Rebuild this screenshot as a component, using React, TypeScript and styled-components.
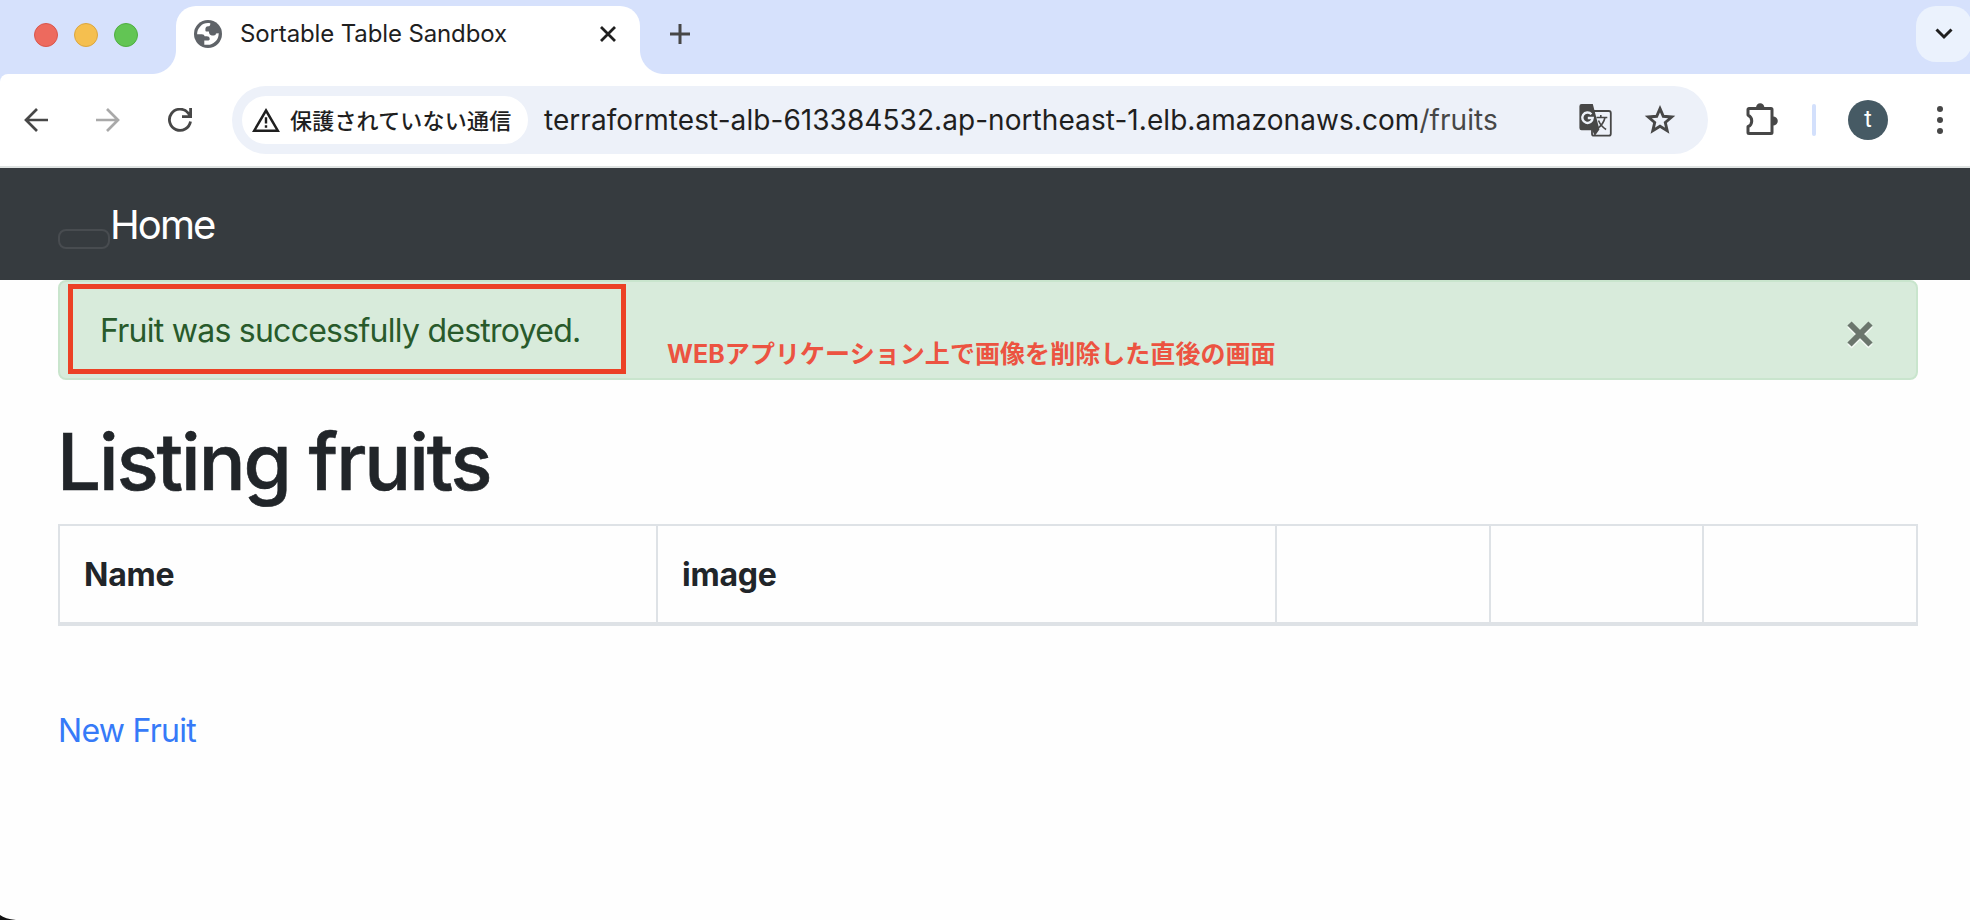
import React from 'react';
import styled, { createGlobalStyle } from 'styled-components';

const GlobalStyle = createGlobalStyle`
  *, *::before, *::after { box-sizing: border-box; }
  html, body { margin: 0; background: #fefefe; overflow: hidden; }
  body { font-family: Inter, "Noto Sans CJK JP", "Liberation Sans", sans-serif; color: #212529; }
`;

const Window = styled.div`
  position: relative;
  display: flex;
  flex-direction: column;
  width: 1970px;
  height: 920px;
  overflow: hidden;
  background: #fefefe;
`;

const TabStrip = styled.div`
  display: flex;
  height: 74px;
  padding-top: 6px;
  background: #d6e1fc;
`;

const TrafficLights = styled.div`
  display: flex;
  gap: 16px;
  width: 176px;
  padding: 17px 0 0 34px;
`;

const Light = styled.span<{ $fill: string; $edge: string }>`
  width: 24px;
  height: 24px;
  border-radius: 50%;
  background: ${(p) => p.$fill};
  border: 1px solid ${(p) => p.$edge};
`;

const Tab = styled.div`
  position: relative;
  display: flex;
  align-items: center;
  width: 464px;
  height: 68px;
  padding: 0 22px 12px 18px;
  border-radius: 20px 20px 0 0;
  background: #fff;

  &::before, &::after {
    content: '';
    position: absolute;
    bottom: 0;
    width: 24px;
    height: 24px;
  }
  &::before { left: -24px; background: radial-gradient(circle at 0 0, transparent 23.5px, #fff 24.5px); }
  &::after { right: -24px; background: radial-gradient(circle at 100% 0, transparent 23.5px, #fff 24.5px); }
`;

const TabTitle = styled.span`
  flex: 1;
  margin-left: 18px;
  font-size: 24px;
  line-height: 30px;
  letter-spacing: -0.13px;
  color: #1f1f1f;
  white-space: nowrap;
`;

const NewTab = styled.div`
  width: 56px;
  height: 56px;
  margin-left: 12px;
  display: flex;
  align-items: center;
  justify-content: center;
`;

const TabSearch = styled.div`
  flex: none;
  display: flex;
  align-items: center;
  justify-content: center;
  width: 56px;
  height: 56px;
  margin-left: auto;
  margin-right: -2px;
  border-radius: 20px;
  background: #ebf2fd;
`;

const ToolbarBack = styled.div`
  background: #d6e1fc;
`;

const Toolbar = styled.div`
  display: flex;
  align-items: center;
  height: 94px;
  border-bottom: 2px solid #dfe3e2;
  border-top-left-radius: 8px;
  background: #fff;
`;

const NavButtons = styled.div`
  display: flex;
  align-items: center;
  gap: 48px;
  width: 232px;
  padding-left: 24px;
`;

const Omnibox = styled.div`
  display: flex;
  align-items: center;
  width: 1476px;
  height: 68px;
  padding: 0 32px 0 10px;
  border-radius: 34px;
  background: #edf1f9;
`;

const SecurityChip = styled.div`
  display: flex;
  align-items: center;
  gap: 10px;
  width: 286px;
  height: 48px;
  padding-left: 10px;
  border-radius: 24px;
  background: #fff;
`;

const ChipLabel = styled.span`
  padding-bottom: 3px;
  font: 500 22px/32px "Noto Sans CJK JP", sans-serif;
  letter-spacing: 0.2px;
  color: #1f1f1f;
  white-space: nowrap;
`;

const Url = styled.span`
  flex: 1;
  margin-left: 16px;
  font-size: 28px;
  line-height: 36px;
  letter-spacing: 0.06px;
  color: #1f1f1f;
  white-space: nowrap;
`;

const UrlPath = styled.span`
  color: #474747;
`;

const OmniActions = styled.div`
  display: flex;
  align-items: center;
  gap: 32px;
`;

const PuzzleSlot = styled.span`
  display: flex;
  margin: 0 0 3px 38px;
`;

const Divider = styled.span`
  width: 4px;
  height: 32px;
  margin-left: 34px;
  border-radius: 2px;
  background: #d3e0fc;
`;

const Avatar = styled.span`
  width: 40px;
  height: 40px;
  margin: 0 49px 0 32px;
  border-radius: 50%;
  background: #465a64;
  color: #fff;
  font: 400 23px/39px Roboto, sans-serif;
  text-align: center;
`;

const Navbar = styled.nav`
  display: flex;
  height: 112px;
  padding-left: 58px;
  background: #363b3f;
`;

const Toggler = styled.span`
  width: 52px;
  height: 20px;
  margin-top: 61px;
  border: 2px solid #484c50;
  border-radius: 8px;
`;

const Brand = styled.a`
  margin-top: 27px;
  font-size: 40px;
  line-height: 60px;
  letter-spacing: -1.9px;
  color: #fff;
`;

const Content = styled.main`
  padding: 0 52px 0 58px;
`;

const Alert = styled.div`
  position: relative;
  display: flex;
  height: 100px;
  padding: 25px 40px 0;
  border: 2px solid #c9e5cd;
  border-radius: 8px;
  background: #d8ebdb;
  color: #285a2b;
  font-size: 32px;
  line-height: 48px;
`;

const AlertText = styled.span`
  letter-spacing: -0.74px;
  white-space: nowrap;
`;

const Highlight = styled.span`
  position: absolute;
  left: 8px;
  top: 2px;
  width: 558px;
  height: 90px;
  border: 5px solid #ec4125;
`;

const Annotation = styled.span`
  position: absolute;
  left: 607px;
  top: 54px;
  font: 700 25px/36px Inter, "Noto Sans CJK JP", sans-serif;
  letter-spacing: 0.06px;
  color: #ec5341;
  white-space: nowrap;
`;

const Dismiss = styled.span`
  display: flex;
  margin: 13px 2px 0 auto;
`;

const Heading = styled.h1`
  margin: 34px 0 14px -1px;
  font-size: 78px;
  font-weight: 500;
  line-height: 96px;
  letter-spacing: -2.05px;
  color: #212529;
  -webkit-text-stroke: 0.6px #212529;
`;

const Table = styled.div`
  display: grid;
  grid-template-columns: 598px 619px 214px 213px 1fr;
  height: 102px;
  border: 2px solid #dee2e6;
  border-bottom-width: 4px;
`;

const HeadCell = styled.div`
  padding: 25px 24px 0;
  border-right: 2px solid #dee2e6;
  font-size: 32px;
  font-weight: 700;
  line-height: 48px;
  letter-spacing: -0.25px;
  &:last-child { border-right: 0; }
`;

const NewLink = styled.a`
  display: inline-block;
  margin-top: 81px;
  font-size: 32px;
  line-height: 48px;
  letter-spacing: -0.72px;
  color: #367af8;
`;

const Corner = styled.svg`
  position: absolute;
  left: 0;
  bottom: 0;
`;

const Globe = () => (
  <svg width="28" height="28" viewBox="0 0 28 28">
    <circle cx="14" cy="14" r="14" fill="#5f6368" />
    <path
      fill="#fff"
      d="M14 3.100c1 0 1.600.1 2.400.3-.2 2-.8 2.800-2.300 2.800-1.700.1-2.700 1-2.700 2.900v1.100c0 1 .5 1.400 1.400 1.400h2.100c.1 2.400 1 3.800 2.900 3.800h2c1.400 0 2-.6 2.200-1.900l2.700-.2c.1 5.500-3.400 9.900-8.900 11.400H10.300v-4.300h4.100c.9 0 1.300-.6 1.300-1.600-.1-1.700-1.200-2.500-2.900-2.500h-2.200c-.2-1.400-1.100-2.100-2.700-2.100H3.100A11 11 0 0 1 14 3.100z"
    />
  </svg>
);

const Arrow = ({ flip = false, color = '#474747' }: { flip?: boolean; color?: string }) => (
  <svg width="24" height="24" viewBox="0 0 24 24" fill="none" stroke={color} strokeWidth="2.7" transform={flip ? 'scale(-1 1)' : undefined}>
    <path d="M24 12H2.500M13 1 2 12l11 11" />
  </svg>
);

const Reload = () => (
  <svg width="24" height="24" viewBox="0 0 24 24" fill="none" stroke="#474747" strokeWidth="2.800">
    <path d="M22.500 13.500A10.600 10.600 0 1 1 20 4.800l2 2.500M22.600 0v8.600H14" />
  </svg>
);

const Warning = () => (
  <svg width="28" height="24" viewBox="0 0 28 24">
    <path fill="none" stroke="#1f1f1f" strokeWidth="2.500" d="M14 2.500 25.800 22.700H2.200z" />
    <path fill="#1f1f1f" d="M12.800 9.200h2.400v6.400h-2.400zM12.800 17.300h2.400v2.500h-2.400z" />
  </svg>
);

const Translate = () => (
  <svg width="33" height="34" viewBox="0 0 33 34">
    <rect x="13" y="8" width="18.800" height="24.700" rx="2" fill="#edf1f9" stroke="#474747" strokeWidth="1.800" />
    <path fill="#474747" d="M2.600 1h11.200l6.600 25.500-4.600 6.500-2.600-5.800H2.600A2.200 2.200 0 0 1 .4 25V3.200A2.200 2.200 0 0 1 2.600 1z" />
    <path fill="none" stroke="#474747" strokeWidth="1.600" d="M17.500 14.500h10.800M21.800 12v2.500M26 14.500c-1 4.800-4 8.700-8 11.300M19.500 17.500c1.500 3.500 4.200 7 7.600 9" />
    <path fill="none" stroke="#edf1f9" strokeWidth="2.400" d="M12.400 11.300A5.200 5.200 0 1 0 13.700 15H8.800" />
  </svg>
);

const Star = () => (
  <svg width="32" height="32" viewBox="0 0 32 32">
    <path fill="none" stroke="#474747" strokeWidth="2.900" d="M16 4.600l3.300 7.700 8.400.7-6.400 5.500 1.900 8.200L16 22.300l-7.200 4.400 1.900-8.200L4.300 13l8.400-.7z" />
  </svg>
);

const Puzzle = () => (
  <svg width="32" height="32" viewBox="0 0 32 32">
    <path fill="none" stroke="#474747" strokeWidth="3" strokeLinejoin="round" d="M3 5.500h22a1 1 0 0 1 1 1v23a1 1 0 0 1-1 1H3a1 1 0 0 1-1-1v-5.800c5-2.400 5-9.200 0-11.600V6.500a1 1 0 0 1 1-1z" />
    <path fill="#474747" d="M10 5a4.200 4.800 0 0 1 8.400 0zM27 13.500a4.800 4.500 0 0 1 0 9z" />
  </svg>
);

const Kebab = () => (
  <svg width="6" height="28" viewBox="0 0 6 28" fill="#474747">
    <circle cx="3" cy="3" r="3" />
    <circle cx="3" cy="14" r="3" />
    <circle cx="3" cy="25" r="3" />
  </svg>
);

const columns = ['Name', 'image', '', '', ''];

export default function App() {
  return (
    <Window>
      <GlobalStyle />
      <TabStrip>
        <TrafficLights>
          <Light $fill="#ed6a5e" $edge="#d9564b" />
          <Light $fill="#f5bf4f" $edge="#dba63f" />
          <Light $fill="#62c554" $edge="#4fae40" />
        </TrafficLights>
        <Tab>
          <Globe />
          <TabTitle>Sortable Table Sandbox</TabTitle>
          <svg width="20" height="20" viewBox="0 0 20 20" fill="none" stroke="#1f1f1f" strokeWidth="2.800">
            <path d="M3 3l14 14M17 3 3 17" />
          </svg>
        </Tab>
        <NewTab>
          <svg width="20" height="20" viewBox="0 0 20 20" stroke="#474747" strokeWidth="3">
            <path d="M10 0v20M0 10h20" />
          </svg>
        </NewTab>
        <TabSearch>
          <svg width="18" height="12" viewBox="0 0 18 12" fill="none" stroke="#1f1f1f" strokeWidth="3">
            <path d="M1.500 1.500 9 9l7.500-7.500" />
          </svg>
        </TabSearch>
      </TabStrip>
      <ToolbarBack>
        <Toolbar>
          <NavButtons>
            <Arrow />
            <Arrow flip color="#a9a9a9" />
            <Reload />
          </NavButtons>
          <Omnibox>
            <SecurityChip>
              <Warning />
              <ChipLabel>保護されていない通信</ChipLabel>
            </SecurityChip>
            <Url>
              terraformtest-alb-613384532.ap-northeast-1.elb.amazonaws.com<UrlPath>/fruits</UrlPath>
            </Url>
            <OmniActions>
              <Translate />
              <Star />
            </OmniActions>
          </Omnibox>
          <PuzzleSlot><Puzzle /></PuzzleSlot>
          <Divider />
          <Avatar>t</Avatar>
          <Kebab />
        </Toolbar>
      </ToolbarBack>
      <Navbar>
        <Toggler />
        <Brand>Home</Brand>
      </Navbar>
      <Content>
        <Alert>
          <AlertText>Fruit was successfully destroyed.</AlertText>
          <Highlight />
          <Annotation>WEBアプリケーション上で画像を削除した直後の画面</Annotation>
          <Dismiss>
            <svg width="28" height="30" viewBox="0 0 28 30" fill="none" strokeWidth="6">
              <path stroke="#fff" opacity="0.700" d="M3.500 5.500l21 21M24.500 5.500l-21 21" />
              <path stroke="#6b766d" d="M3.500 3.500l21 21M24.500 3.500l-21 21" />
            </svg>
          </Dismiss>
        </Alert>
        <Heading>Listing fruits</Heading>
        <Table>
          {columns.map((name, i) => (
            <HeadCell key={i}>{name}</HeadCell>
          ))}
        </Table>
        <NewLink>New Fruit</NewLink>
      </Content>
      <Corner width="16" height="6" viewBox="0 0 16 6">
        <path fill="#111" d="M0 1Q5 5 16 6H0z" />
      </Corner>
    </Window>
  );
}
